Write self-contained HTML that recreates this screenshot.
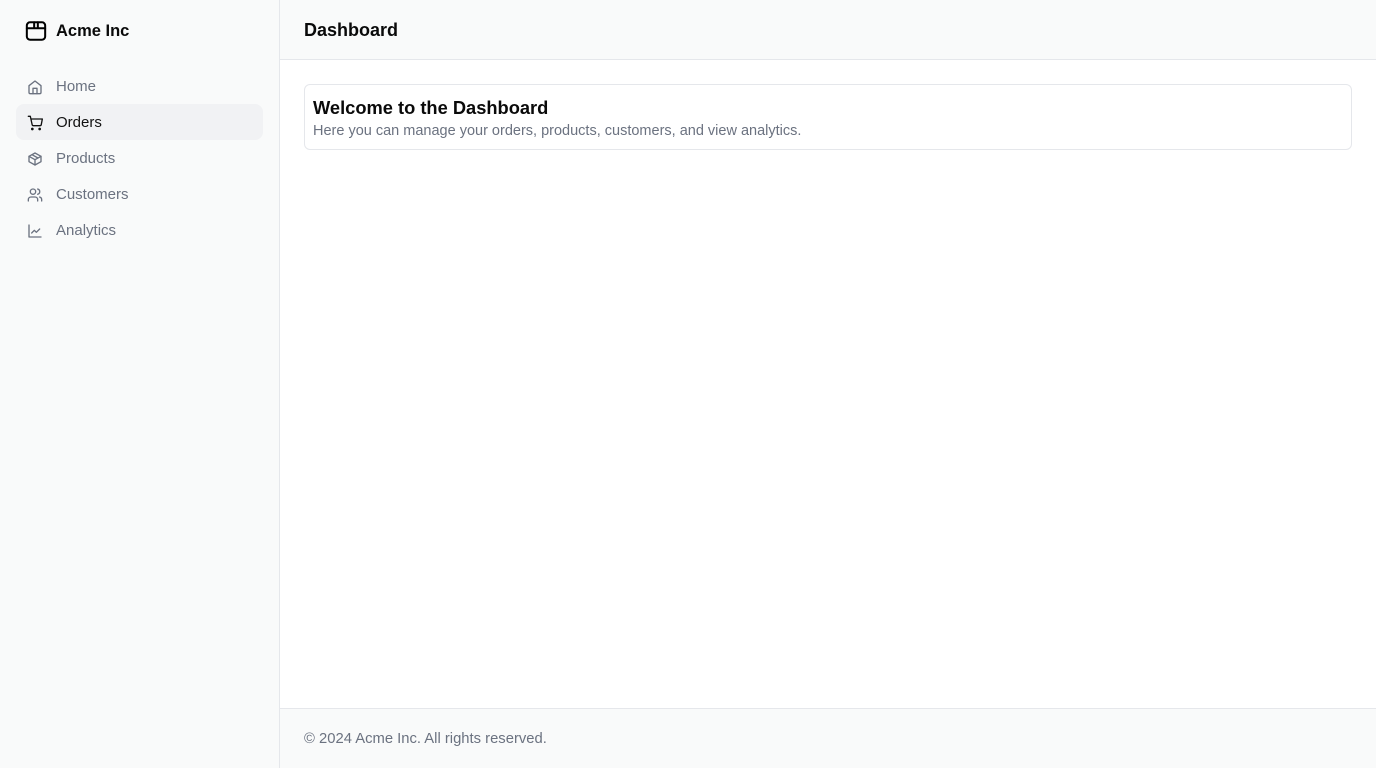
<!DOCTYPE html>
<html><head><meta charset="utf-8"><style>
*{box-sizing:border-box;margin:0;padding:0}
body{width:1376px;height:768px;font-family:"Liberation Sans",sans-serif;background:#fff;position:relative;overflow:hidden}
.side{position:absolute;left:0;top:0;width:280px;height:768px;background:#f9fafa;border-right:1px solid #e5e7eb}
.brand{position:absolute;left:25px;top:20px;display:flex;align-items:center;font-weight:bold;font-size:16.5px;color:#0a0a0a}
.brand svg{margin-right:9px}
.nav{position:absolute;left:16px;top:68px;width:247px}
.item{height:36px;display:flex;align-items:center;padding-left:11px;font-size:15px;color:#6b7280;border-radius:8px;padding-top:1px}
.item svg{margin-right:13px}
.item.active{background:#f1f2f4;color:#111}
.top{position:absolute;left:280px;top:0;right:0;height:60px;background:#f9fafa;border-bottom:1px solid #e5e7eb}
.top h1{position:absolute;left:24px;top:20px;font-size:18px;font-weight:bold;color:#0a0a0a}
.card{position:absolute;left:304px;top:84px;width:1048px;height:66px;border:1px solid #e5e7eb;border-radius:6px;padding:12px 8px}
.card h2{font-size:18.3px;font-weight:bold;color:#0a0a0a}
.card p{font-size:14.5px;color:#6b7280;margin-top:4px}
.foot{position:absolute;left:280px;right:0;top:708px;height:60px;background:#f9fafa;border-top:1px solid #e5e7eb}
.foot p{position:absolute;left:24px;top:22px;font-size:14.8px;color:#6b7280}
</style></head><body>
<div class="side">
<div class="brand"><svg width="22" height="22" viewBox="0 0 24 24" fill="none" stroke="#000" stroke-width="2.2" stroke-linecap="round" stroke-linejoin="round"><rect x="2" y="2.5" width="20" height="19" rx="3.5"/><path d="M2 9h20M10 2.5v6.5M14 2.5v6.5"/></svg>Acme Inc</div>
<div class="nav">
<div class="item"><svg width="16" height="16" viewBox="0 0 24 24" fill="none" stroke="#6b7280" stroke-width="2" stroke-linecap="round" stroke-linejoin="round"><path d="M3 10l9-7 9 7v10a2 2 0 0 1-2 2H5a2 2 0 0 1-2-2z"/><path d="M9 22v-8h6v8"/></svg>Home</div>
<div class="item active"><svg width="16" height="16" viewBox="0 0 24 24" fill="none" stroke="#111" stroke-width="2" stroke-linecap="round" stroke-linejoin="round"><circle cx="8" cy="21" r="1"/><circle cx="19" cy="21" r="1"/><path d="M2 2h3l2.7 12.4a2 2 0 0 0 2 1.6h9.7a2 2 0 0 0 2-1.6L23 6H6"/></svg>Orders</div>
<div class="item"><svg width="16" height="16" viewBox="0 0 24 24" fill="none" stroke="#6b7280" stroke-width="2" stroke-linecap="round" stroke-linejoin="round"><path d="M21 8l-9-5-9 5v8l9 5 9-5z"/><path d="M3 8l9 5 9-5M12 13v8M7.5 5.5l9 5"/></svg>Products</div>
<div class="item"><svg width="16" height="16" viewBox="0 0 24 24" fill="none" stroke="#6b7280" stroke-width="2" stroke-linecap="round" stroke-linejoin="round"><path d="M16 21v-2a4 4 0 0 0-4-4H6a4 4 0 0 0-4 4v2"/><circle cx="9" cy="7" r="4"/><path d="M22 21v-2a4 4 0 0 0-3-3.9M16 3.1a4 4 0 0 1 0 7.8"/></svg>Customers</div>
<div class="item"><svg width="16" height="16" viewBox="0 0 24 24" fill="none" stroke="#6b7280" stroke-width="2" stroke-linecap="round" stroke-linejoin="round"><path d="M3 3v18h18"/><path d="M7 15l4-4 3 3 5-5"/></svg>Analytics</div>
</div>
</div>
<div class="top"><h1>Dashboard</h1></div>
<div class="card"><h2>Welcome to the Dashboard</h2><p>Here you can manage your orders, products, customers, and view analytics.</p></div>
<div class="foot"><p>© 2024 Acme Inc. All rights reserved.</p></div>
</body></html>
